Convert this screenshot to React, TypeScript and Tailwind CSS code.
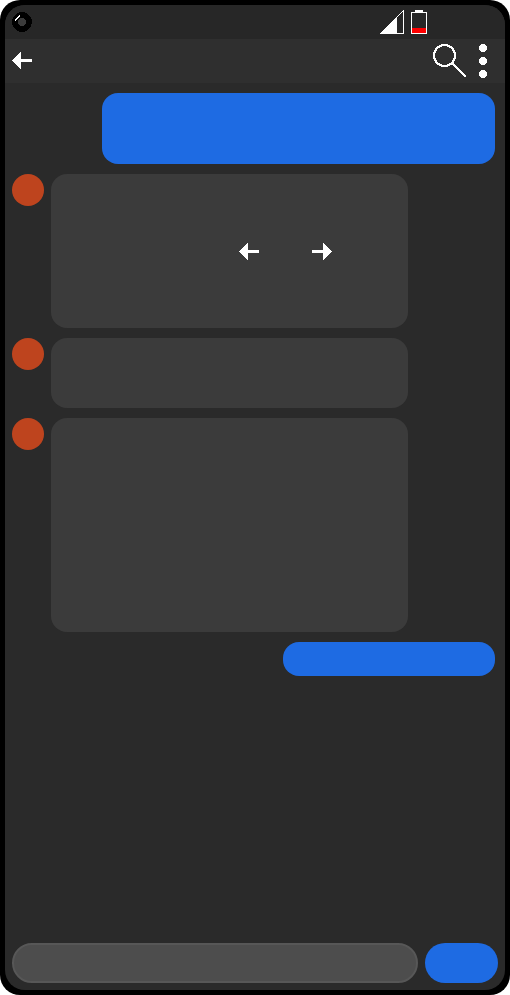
function Arrow({ flip = false }: { flip?: boolean }) {
  return (
    <svg width="20" height="17" viewBox="0 0 20 17" shapeRendering="crispEdges" className={flip ? "-scale-x-100" : ""}>
      <path d="M0 8.5 8.5 0H9V7H20V10H9V17H8.5Z" fill="#fff" />
    </svg>
  );
}

function StatusBar() {
  return (
    <div className="flex h-[34px] shrink-0 items-start bg-[#272727] pl-[7px]">
      <svg className="mt-[7px]" width="20" height="20" viewBox="0 0 20 20" shapeRendering="crispEdges">
        <circle cx="10" cy="10" r="10" fill="#000" />
        <circle cx="10" cy="10" r="4" fill="#3b3b3b" />
        <path d="M3 8.3 7.8 3.3" stroke="#fff" strokeWidth="1.5" />
      </svg>
      <svg className="mt-[5px] ml-[348px]" width="24" height="24" viewBox="0 0 24 24" shapeRendering="crispEdges">
        <path d="M0 24 17 7V24Z" fill="#fff" />
        <path d="M0.5 23.5 23.5 0.5V23.5Z" fill="none" stroke="#fff" />
      </svg>
      <svg className="mt-[5px] ml-[7px]" width="16" height="24" viewBox="0 0 16 24" shapeRendering="crispEdges">
        <path d="M4 0H12V3H4Z" fill="#fff" />
        <path d="M0.5 2.5H15.5V23.5H0.5Z" fill="#272727" stroke="#fff" />
        <path d="M1 18H15V23H1Z" fill="#f00" />
      </svg>
    </div>
  );
}

function Header() {
  return (
    <div className="flex h-11 shrink-0 items-start bg-[#2f2f2f] pl-[7px]">
      <div className="mt-[13px]">
        <Arrow />
      </div>
      <svg className="mt-[5px] ml-[401px]" width="34" height="34" viewBox="0 0 34 34" shapeRendering="crispEdges">
        <circle cx="11.5" cy="11.5" r="10.5" fill="none" stroke="#fff" strokeWidth="2" />
        <path d="M19 19 32.2 32.2" stroke="#fff" strokeWidth="2.1" strokeLinecap="round" />
      </svg>
      <div className="mt-[5px] ml-3 flex flex-col gap-[5px]">
        {[0, 1, 2].map((i) => (
          <svg key={i} width="8" height="8" viewBox="0 0 8 8" shapeRendering="crispEdges">
            <circle cx="4" cy="4" r="4.2" fill="#fff" />
          </svg>
        ))}
      </div>
    </div>
  );
}

function Received({ size, arrows = false }: { size: string; arrows?: boolean }) {
  return (
    <div className="flex items-start gap-[7px]">
      <div className="size-8 rounded-full bg-[#be441e]" />
      <div className={`w-[357px] rounded-[16px] bg-[#3b3b3b] ${size}`}>
        {arrows && (
          <div className="flex gap-[53px] pt-[69px] pl-[188px]">
            <Arrow />
            <Arrow flip />
          </div>
        )}
      </div>
    </div>
  );
}

export default function App() {
  return (
    <div className="h-[995px] w-[510px] bg-white">
      <div className="h-full rounded-[20px] bg-black p-[5px]">
        <div className="flex h-full flex-col overflow-hidden rounded-[20px] bg-[#2a2a2a]">
          <StatusBar />
          <Header />
          <main className="flex flex-1 flex-col gap-[10px] pt-[10px] pr-[10px] pl-[7px]">
            <div className="h-[71px] w-[393px] self-end rounded-[16px] bg-[#1e6be3]" />
            <Received size="h-[154px]" arrows />
            <Received size="h-[70px]" />
            <Received size="h-[214px]" />
            <div className="h-[34px] w-[212px] self-end rounded-[16px] bg-[#1e6be3]" />
          </main>
          <footer className="flex shrink-0 gap-[7px] pb-[7px] pl-[7px]">
            <div className="h-10 w-[406px] rounded-[20px] border-2 border-[#575757] bg-[#4d4d4d]" />
            <div className="h-10 w-[73px] rounded-[20px] bg-[#1e6be3]" />
          </footer>
        </div>
      </div>
    </div>
  );
}
